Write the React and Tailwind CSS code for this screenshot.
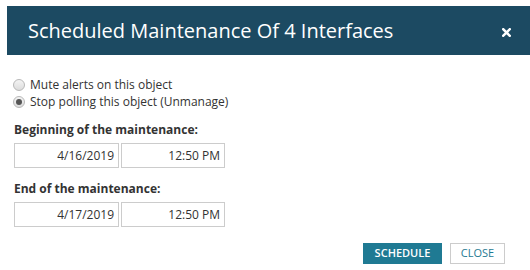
export default function App() {
  const font = { fontFamily: '"Open Sans", sans-serif' };
  return (
    <div className="w-[530px] h-[270px] bg-white overflow-hidden relative" style={font}>
      <div className="ml-[7px] mt-[6px] h-[49px] bg-[#1c4a62] flex items-center pl-[21px] pr-[19px] justify-between">
        <span className="text-white text-[20px] leading-none">Scheduled Maintenance Of 4 Interfaces</span>
        <svg width="9" height="9" viewBox="0 0 9 9" className="mt-[3px]">
          <path d="M1.2 1.2 L7.8 7.8 M7.8 1.2 L1.2 7.8" stroke="white" strokeWidth="2.4" strokeLinecap="square" />
        </svg>
      </div>
      <div className="pl-[13px] pt-[21px] text-[12px] text-[#333]">
        <label className="flex items-center gap-[5px] h-[17px]">
          <span className="w-[12px] h-[12px] rounded-full border border-[#b8b8b8] bg-gradient-to-b from-[#f4f4f4] to-[#dcdcdc]" />
          <span>Mute alerts on this object</span>
        </label>
        <label className="flex items-center gap-[5px] h-[17px]">
          <span className="w-[12px] h-[12px] rounded-full border border-[#b8b8b8] bg-gradient-to-b from-[#f4f4f4] to-[#dcdcdc] flex items-center justify-center">
            <span className="w-[6px] h-[6px] rounded-full bg-[#555]" />
          </span>
          <span>Stop polling this object (Unmanage)</span>
        </label>
      </div>
      <div className="pl-[14px] text-[12px] text-[#333]">
        <div className="font-bold mt-[12px] leading-[16px]">Beginning of the maintenance:</div>
        <div className="flex gap-[2px] mt-[5px]">
          <div className="w-[105px] h-[25px] border border-[#ccc] flex items-center justify-end pr-[4px]">4/16/2019</div>
          <div className="w-[104px] h-[25px] border border-[#ccc] flex items-center justify-end pr-[4px]">12:50 PM</div>
        </div>
        <div className="font-bold mt-[13px] leading-[16px]">End of the maintenance:</div>
        <div className="flex gap-[2px] mt-[5px]">
          <div className="w-[105px] h-[25px] border border-[#ccc] flex items-center justify-end pr-[4px]">4/17/2019</div>
          <div className="w-[104px] h-[25px] border border-[#ccc] flex items-center justify-end pr-[4px]">12:50 PM</div>
        </div>
      </div>
      <div className="flex justify-end gap-[8px] pr-[25px] mt-[16px]">
        <button className="w-[79px] h-[21px] bg-[#1f7a93] text-white text-[11px] font-semibold">SCHEDULE</button>
        <button className="w-[55px] h-[21px] border border-[#ccc] bg-white text-[#1f7a93] text-[11px]">CLOSE</button>
      </div>
    </div>
  );
}
